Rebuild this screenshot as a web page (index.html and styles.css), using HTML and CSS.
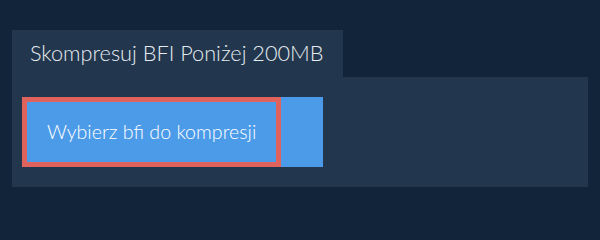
FILE: index.html
```html
<!DOCTYPE html>
<html lang="pl">
<head>
<meta charset="utf-8">
<link rel="stylesheet" href="styles.css">
</head>
<body>
<div class="page">
  <div class="tab">Skompresuj BFI Poniżej 200MB</div>
  <div class="panel">
    <div class="button">
      <span class="label">Wybierz bfi do kompresji</span>
    </div>
  </div>
</div>
</body>
</html>
```
FILE: styles.css
```css
html, body {
  margin: 0;
  padding: 0;
  background: #11243a;
  font-family: Lato, "Noto Sans", sans-serif;
}
.page {
  padding: 30px 12px 0 12px;
}
.tab {
  display: inline-block;
  background: #22374e;
  color: #e6ebf0;
  font-size: 21.7px;
  font-weight: 300;
  line-height: 47px;
  height: 47px;
  padding: 0 19px 0 18px;
  box-sizing: border-box;
}
.panel {
  background: #22374e;
  padding: 20px 10px;
  height: 110px;
  box-sizing: border-box;
}
.button {
  display: inline-flex;
  background: #4c9be8;
  padding-right: 42px;
  height: 70px;
}
.label {
  display: block;
  border: 5px solid #e0625c;
  color: #ffffff;
  font-size: 19.6px;
  font-weight: 300;
  line-height: 60px;
  padding: 0 20px;
}
```
